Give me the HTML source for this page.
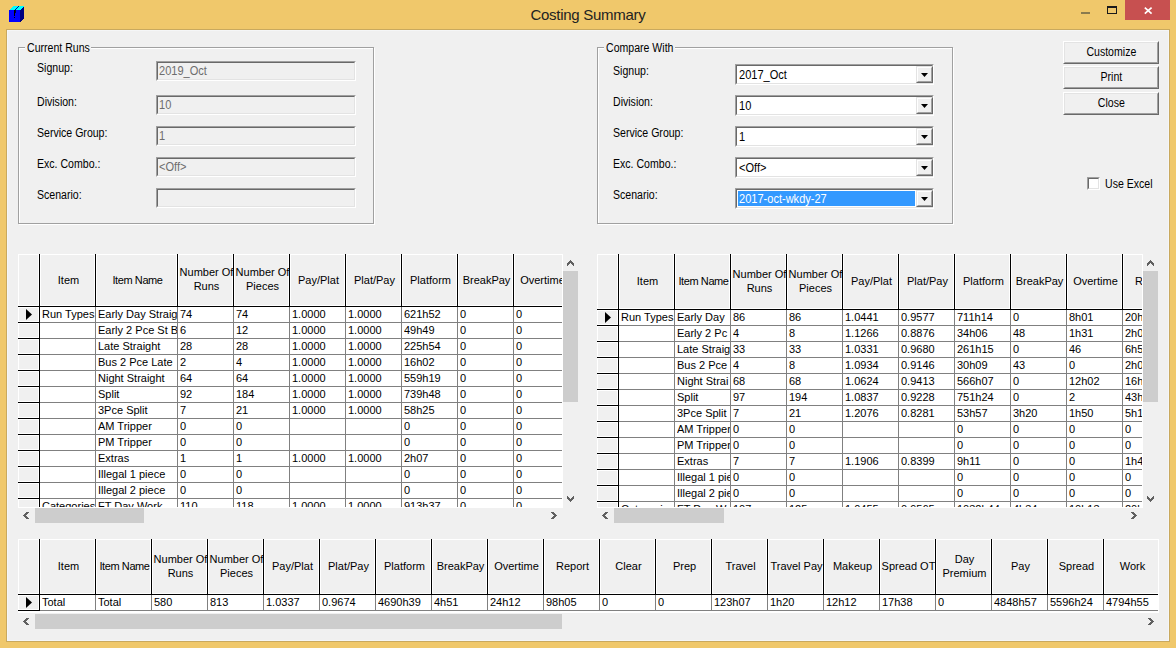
<!DOCTYPE html>
<html><head><meta charset="utf-8"><title>Costing Summary</title>
<style>
html,body{margin:0;padding:0;width:1176px;height:648px;overflow:hidden;background:#F0C86B}
body div{position:absolute;box-sizing:border-box}
.dt{font-family:'Liberation Sans', sans-serif;font-size:12px;line-height:14px;white-space:nowrap;color:#000;transform-origin:0 0}
.gt{font-family:'Liberation Sans', sans-serif;font-size:11px;line-height:13px;white-space:nowrap;color:#000}
</style></head><body>
<div style="left:0;top:0;width:1176px;height:648px;background:#F0C86B"></div>
<div style="left:6px;top:29px;width:1164px;height:613px;background:#C9A95E;"></div>
<div style="left:7px;top:30px;width:1162px;height:611px;background:#F5F6F7;"></div>
<div style="left:8px;top:31px;width:1160px;height:609px;background:#F0F0F0;"></div>
<div style="left:0;top:6px;width:1176px;height:17px;text-align:center;font-family:'Liberation Sans', sans-serif;font-size:15px;letter-spacing:-0.27px;line-height:17px;color:#222">Costing Summary</div>
<svg style="position:absolute;left:0;top:0" width="40" height="30" shape-rendering="crispEdges">
<polygon points="9,10 13,6 24,6 20,10" fill="#00FFFF"/>
<polygon points="20,10 24,6 24,18 20,22" fill="#000080"/>
<rect x="9" y="10" width="11" height="12" fill="#0000FF"/>
<polygon points="14,10 18,6 19,6 15,10" fill="#0000A0"/>
<rect x="14" y="10" width="1" height="6" fill="#000"/>
<rect x="15" y="10" width="1" height="3" fill="#000040"/>
<rect x="14" y="17" width="1" height="1" fill="#000"/>
</svg>
<div style="left:1081px;top:12px;width:9px;height:2px;background:#8A7B4E;"></div>
<div style="left:1107px;top:6px;width:10px;height:8px;border:1px solid #1a1a1a;border-top-width:2px"></div>
<div style="left:1125px;top:0px;width:45px;height:20px;background:#C75050;"></div>
<svg style="position:absolute;left:1125px;top:0" width="45" height="20">
<path d="M19.8 7.6 L26.6 13.6 M26.6 7.6 L19.8 13.6" stroke="#fff" stroke-width="1.7" fill="none"/>
</svg>
<div style="left:19px;top:48px;width:356px;height:177px;border:1px solid #fff;box-sizing:border-box"></div>
<div style="left:18px;top:47px;width:356px;height:177px;border:1px solid #A0A0A0;box-sizing:border-box"></div>
<div style="left:25px;top:45px;width:66px;height:5px;background:#F0F0F0;"></div>
<div class="dt" style="left:27px;top:41px;color:#000;transform:scaleX(0.88);">Current Runs</div>
<div style="left:598px;top:48px;width:356px;height:177px;border:1px solid #fff;box-sizing:border-box"></div>
<div style="left:597px;top:47px;width:356px;height:177px;border:1px solid #A0A0A0;box-sizing:border-box"></div>
<div style="left:604px;top:45px;width:71px;height:5px;background:#F0F0F0;"></div>
<div class="dt" style="left:606px;top:41px;color:#000;transform:scaleX(0.88);">Compare With</div>
<div class="dt" style="left:37px;top:61px;color:#000;transform:scaleX(0.88);">Signup:</div>
<div style="left:156px;top:61px;width:200px;height:20px;background:#F0F0F0;border-style:solid;border-width:1px;border-color:#A0A0A0 #FFFFFF #FFFFFF #A0A0A0;box-sizing:border-box"></div>
<div style="left:157px;top:62px;width:198px;height:18px;border-style:solid;border-width:1px;border-color:#696969 #E3E3E3 #E3E3E3 #696969;box-sizing:border-box"></div>
<div class="dt" style="left:159px;top:64px;color:#6D6D6D;transform:scaleX(0.92);">2019_Oct</div>
<div class="dt" style="left:37px;top:95px;color:#000;transform:scaleX(0.88);">Division:</div>
<div style="left:156px;top:95px;width:200px;height:20px;background:#F0F0F0;border-style:solid;border-width:1px;border-color:#A0A0A0 #FFFFFF #FFFFFF #A0A0A0;box-sizing:border-box"></div>
<div style="left:157px;top:96px;width:198px;height:18px;border-style:solid;border-width:1px;border-color:#696969 #E3E3E3 #E3E3E3 #696969;box-sizing:border-box"></div>
<div class="dt" style="left:159px;top:98px;color:#6D6D6D;transform:scaleX(0.92);">10</div>
<div class="dt" style="left:37px;top:126px;color:#000;transform:scaleX(0.88);">Service Group:</div>
<div style="left:156px;top:126px;width:200px;height:20px;background:#F0F0F0;border-style:solid;border-width:1px;border-color:#A0A0A0 #FFFFFF #FFFFFF #A0A0A0;box-sizing:border-box"></div>
<div style="left:157px;top:127px;width:198px;height:18px;border-style:solid;border-width:1px;border-color:#696969 #E3E3E3 #E3E3E3 #696969;box-sizing:border-box"></div>
<div class="dt" style="left:159px;top:129px;color:#6D6D6D;transform:scaleX(0.92);">1</div>
<div class="dt" style="left:37px;top:157px;color:#000;transform:scaleX(0.88);">Exc. Combo.:</div>
<div style="left:156px;top:157px;width:200px;height:20px;background:#F0F0F0;border-style:solid;border-width:1px;border-color:#A0A0A0 #FFFFFF #FFFFFF #A0A0A0;box-sizing:border-box"></div>
<div style="left:157px;top:158px;width:198px;height:18px;border-style:solid;border-width:1px;border-color:#696969 #E3E3E3 #E3E3E3 #696969;box-sizing:border-box"></div>
<div class="dt" style="left:159px;top:160px;color:#6D6D6D;transform:scaleX(0.92);">&lt;Off&gt;</div>
<div class="dt" style="left:37px;top:188px;color:#000;transform:scaleX(0.88);">Scenario:</div>
<div style="left:156px;top:188px;width:200px;height:20px;background:#F0F0F0;border-style:solid;border-width:1px;border-color:#A0A0A0 #FFFFFF #FFFFFF #A0A0A0;box-sizing:border-box"></div>
<div style="left:157px;top:189px;width:198px;height:18px;border-style:solid;border-width:1px;border-color:#696969 #E3E3E3 #E3E3E3 #696969;box-sizing:border-box"></div>
<div class="dt" style="left:613px;top:64px;color:#000;transform:scaleX(0.88);">Signup:</div>
<div style="left:735px;top:64px;width:199px;height:21px;background:#FFFFFF;border-style:solid;border-width:1px;border-color:#A0A0A0 #FFFFFF #FFFFFF #A0A0A0;box-sizing:border-box"></div>
<div style="left:736px;top:65px;width:197px;height:19px;border-style:solid;border-width:1px;border-color:#696969 #E3E3E3 #E3E3E3 #696969;box-sizing:border-box"></div>
<div style="left:916px;top:66px;width:17px;height:17px;background:#F0F0F0;border-style:solid;border-width:1px;border-color:#E3E3E3 #696969 #696969 #E3E3E3;box-sizing:border-box"></div>
<div style="left:917px;top:67px;width:15px;height:15px;border-style:solid;border-width:1px;border-color:#FFFFFF #A0A0A0 #A0A0A0 #FFFFFF;box-sizing:border-box"></div>
<svg style="position:absolute;left:921px;top:73px" width="8" height="5"><polygon points="0,0 7,0 3.5,4" fill="#000"/></svg>
<div class="dt" style="left:739px;top:68px;color:#000;transform:scaleX(0.92);">2017_Oct</div>
<div class="dt" style="left:613px;top:95px;color:#000;transform:scaleX(0.88);">Division:</div>
<div style="left:735px;top:95px;width:199px;height:21px;background:#FFFFFF;border-style:solid;border-width:1px;border-color:#A0A0A0 #FFFFFF #FFFFFF #A0A0A0;box-sizing:border-box"></div>
<div style="left:736px;top:96px;width:197px;height:19px;border-style:solid;border-width:1px;border-color:#696969 #E3E3E3 #E3E3E3 #696969;box-sizing:border-box"></div>
<div style="left:916px;top:97px;width:17px;height:17px;background:#F0F0F0;border-style:solid;border-width:1px;border-color:#E3E3E3 #696969 #696969 #E3E3E3;box-sizing:border-box"></div>
<div style="left:917px;top:98px;width:15px;height:15px;border-style:solid;border-width:1px;border-color:#FFFFFF #A0A0A0 #A0A0A0 #FFFFFF;box-sizing:border-box"></div>
<svg style="position:absolute;left:921px;top:104px" width="8" height="5"><polygon points="0,0 7,0 3.5,4" fill="#000"/></svg>
<div class="dt" style="left:739px;top:99px;color:#000;transform:scaleX(0.92);">10</div>
<div class="dt" style="left:613px;top:126px;color:#000;transform:scaleX(0.88);">Service Group:</div>
<div style="left:735px;top:126px;width:199px;height:21px;background:#FFFFFF;border-style:solid;border-width:1px;border-color:#A0A0A0 #FFFFFF #FFFFFF #A0A0A0;box-sizing:border-box"></div>
<div style="left:736px;top:127px;width:197px;height:19px;border-style:solid;border-width:1px;border-color:#696969 #E3E3E3 #E3E3E3 #696969;box-sizing:border-box"></div>
<div style="left:916px;top:128px;width:17px;height:17px;background:#F0F0F0;border-style:solid;border-width:1px;border-color:#E3E3E3 #696969 #696969 #E3E3E3;box-sizing:border-box"></div>
<div style="left:917px;top:129px;width:15px;height:15px;border-style:solid;border-width:1px;border-color:#FFFFFF #A0A0A0 #A0A0A0 #FFFFFF;box-sizing:border-box"></div>
<svg style="position:absolute;left:921px;top:135px" width="8" height="5"><polygon points="0,0 7,0 3.5,4" fill="#000"/></svg>
<div class="dt" style="left:739px;top:130px;color:#000;transform:scaleX(0.92);">1</div>
<div class="dt" style="left:613px;top:157px;color:#000;transform:scaleX(0.88);">Exc. Combo.:</div>
<div style="left:735px;top:157px;width:199px;height:21px;background:#FFFFFF;border-style:solid;border-width:1px;border-color:#A0A0A0 #FFFFFF #FFFFFF #A0A0A0;box-sizing:border-box"></div>
<div style="left:736px;top:158px;width:197px;height:19px;border-style:solid;border-width:1px;border-color:#696969 #E3E3E3 #E3E3E3 #696969;box-sizing:border-box"></div>
<div style="left:916px;top:159px;width:17px;height:17px;background:#F0F0F0;border-style:solid;border-width:1px;border-color:#E3E3E3 #696969 #696969 #E3E3E3;box-sizing:border-box"></div>
<div style="left:917px;top:160px;width:15px;height:15px;border-style:solid;border-width:1px;border-color:#FFFFFF #A0A0A0 #A0A0A0 #FFFFFF;box-sizing:border-box"></div>
<svg style="position:absolute;left:921px;top:166px" width="8" height="5"><polygon points="0,0 7,0 3.5,4" fill="#000"/></svg>
<div class="dt" style="left:739px;top:161px;color:#000;transform:scaleX(0.92);">&lt;Off&gt;</div>
<div class="dt" style="left:613px;top:188px;color:#000;transform:scaleX(0.88);">Scenario:</div>
<div style="left:735px;top:188px;width:199px;height:21px;background:#FFFFFF;border-style:solid;border-width:1px;border-color:#A0A0A0 #FFFFFF #FFFFFF #A0A0A0;box-sizing:border-box"></div>
<div style="left:736px;top:189px;width:197px;height:19px;border-style:solid;border-width:1px;border-color:#696969 #E3E3E3 #E3E3E3 #696969;box-sizing:border-box"></div>
<div style="left:916px;top:190px;width:17px;height:17px;background:#F0F0F0;border-style:solid;border-width:1px;border-color:#E3E3E3 #696969 #696969 #E3E3E3;box-sizing:border-box"></div>
<div style="left:917px;top:191px;width:15px;height:15px;border-style:solid;border-width:1px;border-color:#FFFFFF #A0A0A0 #A0A0A0 #FFFFFF;box-sizing:border-box"></div>
<svg style="position:absolute;left:921px;top:197px" width="8" height="5"><polygon points="0,0 7,0 3.5,4" fill="#000"/></svg>
<div style="left:738px;top:191px;width:177px;height:15px;background:#3399FF;"></div>
<div class="dt" style="left:739px;top:192px;color:#FFFFFF;transform:scaleX(0.92);">2017-oct-wkdy-27</div>
<div style="left:1063px;top:41px;width:96px;height:23px;background:#F0F0F0;border-style:solid;border-width:1px;border-color:#FFFFFF #696969 #696969 #FFFFFF;box-sizing:border-box"></div>
<div style="left:1064px;top:42px;width:94px;height:21px;border-style:solid;border-width:1px;border-color:#E3E3E3 #A0A0A0 #A0A0A0 #E3E3E3;box-sizing:border-box"></div>
<div class="dt" style="left:1063px;top:45px;width:96px;text-align:center"><span style="display:inline-block;transform:scaleX(0.88)">Customize</span></div>
<div style="left:1063px;top:66px;width:96px;height:23px;background:#F0F0F0;border-style:solid;border-width:1px;border-color:#FFFFFF #696969 #696969 #FFFFFF;box-sizing:border-box"></div>
<div style="left:1064px;top:67px;width:94px;height:21px;border-style:solid;border-width:1px;border-color:#E3E3E3 #A0A0A0 #A0A0A0 #E3E3E3;box-sizing:border-box"></div>
<div class="dt" style="left:1063px;top:70px;width:96px;text-align:center"><span style="display:inline-block;transform:scaleX(0.88)">Print</span></div>
<div style="left:1063px;top:92px;width:96px;height:23px;background:#F0F0F0;border-style:solid;border-width:1px;border-color:#FFFFFF #696969 #696969 #FFFFFF;box-sizing:border-box"></div>
<div style="left:1064px;top:93px;width:94px;height:21px;border-style:solid;border-width:1px;border-color:#E3E3E3 #A0A0A0 #A0A0A0 #E3E3E3;box-sizing:border-box"></div>
<div class="dt" style="left:1063px;top:96px;width:96px;text-align:center"><span style="display:inline-block;transform:scaleX(0.88)">Close</span></div>
<div style="left:1087px;top:177px;width:13px;height:13px;background:#FFFFFF;border-style:solid;border-width:1px;border-color:#A0A0A0 #FFFFFF #FFFFFF #A0A0A0;box-sizing:border-box"></div>
<div style="left:1088px;top:178px;width:11px;height:11px;border-style:solid;border-width:1px;border-color:#696969 #E3E3E3 #E3E3E3 #696969;box-sizing:border-box"></div>
<div class="dt" style="left:1105px;top:177px;color:#000;transform:scaleX(0.88);">Use Excel</div>
<div style="left:18px;top:254px;width:545px;height:254px;overflow:hidden;background:#FFFFFF">
<div style="left:0;top:0;width:21px;height:52px;background:#F0F0F0;border:1px solid #fff;box-sizing:border-box"></div>
<div style="left:22px;top:0;width:55px;height:52px;background:#F0F0F0;border:1px solid #fff;box-sizing:border-box"></div>
<div class="gt" style="left:23px;top:20px;width:55px;text-align:center;">Item</div>
<div style="left:77px;top:0;width:1px;height:52px;background:#000"></div>
<div style="left:78px;top:0;width:81px;height:52px;background:#F0F0F0;border:1px solid #fff;box-sizing:border-box"></div>
<div class="gt" style="left:79px;top:20px;width:81px;text-align:center;letter-spacing:-0.4px;">Item Name</div>
<div style="left:159px;top:0;width:1px;height:52px;background:#000"></div>
<div style="left:160px;top:0;width:55px;height:52px;background:#F0F0F0;border:1px solid #fff;box-sizing:border-box"></div>
<div class="gt" style="left:161px;top:11px;width:55px;text-align:center;line-height:14px">Number Of<br>Runs</div>
<div style="left:215px;top:0;width:1px;height:52px;background:#000"></div>
<div style="left:216px;top:0;width:55px;height:52px;background:#F0F0F0;border:1px solid #fff;box-sizing:border-box"></div>
<div class="gt" style="left:217px;top:11px;width:55px;text-align:center;line-height:14px">Number Of<br>Pieces</div>
<div style="left:271px;top:0;width:1px;height:52px;background:#000"></div>
<div style="left:272px;top:0;width:55px;height:52px;background:#F0F0F0;border:1px solid #fff;box-sizing:border-box"></div>
<div class="gt" style="left:273px;top:20px;width:55px;text-align:center;">Pay/Plat</div>
<div style="left:327px;top:0;width:1px;height:52px;background:#000"></div>
<div style="left:328px;top:0;width:55px;height:52px;background:#F0F0F0;border:1px solid #fff;box-sizing:border-box"></div>
<div class="gt" style="left:329px;top:20px;width:55px;text-align:center;">Plat/Pay</div>
<div style="left:383px;top:0;width:1px;height:52px;background:#000"></div>
<div style="left:384px;top:0;width:55px;height:52px;background:#F0F0F0;border:1px solid #fff;box-sizing:border-box"></div>
<div class="gt" style="left:385px;top:20px;width:55px;text-align:center;">Platform</div>
<div style="left:439px;top:0;width:1px;height:52px;background:#000"></div>
<div style="left:440px;top:0;width:55px;height:52px;background:#F0F0F0;border:1px solid #fff;box-sizing:border-box"></div>
<div class="gt" style="left:441px;top:20px;width:55px;text-align:center;">BreakPay</div>
<div style="left:495px;top:0;width:1px;height:52px;background:#000"></div>
<div style="left:496px;top:0;width:55px;height:52px;background:#F0F0F0;border:1px solid #fff;box-sizing:border-box"></div>
<div class="gt" style="left:497px;top:20px;width:55px;text-align:center;">Overtime</div>
<div style="left:551px;top:0;width:1px;height:52px;background:#000"></div>
<div style="left:21px;top:0;width:1px;height:52px;background:#000"></div>
<div style="left:0;top:52px;width:545px;height:1px;background:#000"></div>
<div style="left:0;top:53px;width:21px;height:15px;background:#F0F0F0;border:1px solid #fff;box-sizing:border-box"></div>
<svg style="position:absolute;left:8px;top:55px" width="7" height="12"><polygon points="0,0 6,5.5 0,11" fill="#000"/></svg>
<div style="left:0;top:68px;width:21px;height:1px;background:#000"></div>
<div style="left:22px;top:68px;width:545px;height:1px;background:#808080"></div>
<div class="gt" style="left:24px;top:54px;width:53px;overflow:hidden">Run Types</div>
<div class="gt" style="left:80px;top:54px;width:79px;overflow:hidden">Early Day Straig</div>
<div class="gt" style="left:162px;top:54px;width:53px;overflow:hidden">74</div>
<div class="gt" style="left:218px;top:54px;width:53px;overflow:hidden">74</div>
<div class="gt" style="left:274px;top:54px;width:53px;overflow:hidden">1.0000</div>
<div class="gt" style="left:330px;top:54px;width:53px;overflow:hidden">1.0000</div>
<div class="gt" style="left:386px;top:54px;width:53px;overflow:hidden">621h52</div>
<div class="gt" style="left:442px;top:54px;width:53px;overflow:hidden">0</div>
<div class="gt" style="left:498px;top:54px;width:53px;overflow:hidden">0</div>
<div style="left:0;top:69px;width:21px;height:15px;background:#F0F0F0;border:1px solid #fff;box-sizing:border-box"></div>
<div style="left:0;top:84px;width:21px;height:1px;background:#000"></div>
<div style="left:22px;top:84px;width:545px;height:1px;background:#808080"></div>
<div class="gt" style="left:80px;top:70px;width:79px;overflow:hidden">Early 2 Pce St B</div>
<div class="gt" style="left:162px;top:70px;width:53px;overflow:hidden">6</div>
<div class="gt" style="left:218px;top:70px;width:53px;overflow:hidden">12</div>
<div class="gt" style="left:274px;top:70px;width:53px;overflow:hidden">1.0000</div>
<div class="gt" style="left:330px;top:70px;width:53px;overflow:hidden">1.0000</div>
<div class="gt" style="left:386px;top:70px;width:53px;overflow:hidden">49h49</div>
<div class="gt" style="left:442px;top:70px;width:53px;overflow:hidden">0</div>
<div class="gt" style="left:498px;top:70px;width:53px;overflow:hidden">0</div>
<div style="left:0;top:85px;width:21px;height:15px;background:#F0F0F0;border:1px solid #fff;box-sizing:border-box"></div>
<div style="left:0;top:100px;width:21px;height:1px;background:#000"></div>
<div style="left:22px;top:100px;width:545px;height:1px;background:#808080"></div>
<div class="gt" style="left:80px;top:86px;width:79px;overflow:hidden">Late Straight</div>
<div class="gt" style="left:162px;top:86px;width:53px;overflow:hidden">28</div>
<div class="gt" style="left:218px;top:86px;width:53px;overflow:hidden">28</div>
<div class="gt" style="left:274px;top:86px;width:53px;overflow:hidden">1.0000</div>
<div class="gt" style="left:330px;top:86px;width:53px;overflow:hidden">1.0000</div>
<div class="gt" style="left:386px;top:86px;width:53px;overflow:hidden">225h54</div>
<div class="gt" style="left:442px;top:86px;width:53px;overflow:hidden">0</div>
<div class="gt" style="left:498px;top:86px;width:53px;overflow:hidden">0</div>
<div style="left:0;top:101px;width:21px;height:15px;background:#F0F0F0;border:1px solid #fff;box-sizing:border-box"></div>
<div style="left:0;top:116px;width:21px;height:1px;background:#000"></div>
<div style="left:22px;top:116px;width:545px;height:1px;background:#808080"></div>
<div class="gt" style="left:80px;top:102px;width:79px;overflow:hidden">Bus 2 Pce Late</div>
<div class="gt" style="left:162px;top:102px;width:53px;overflow:hidden">2</div>
<div class="gt" style="left:218px;top:102px;width:53px;overflow:hidden">4</div>
<div class="gt" style="left:274px;top:102px;width:53px;overflow:hidden">1.0000</div>
<div class="gt" style="left:330px;top:102px;width:53px;overflow:hidden">1.0000</div>
<div class="gt" style="left:386px;top:102px;width:53px;overflow:hidden">16h02</div>
<div class="gt" style="left:442px;top:102px;width:53px;overflow:hidden">0</div>
<div class="gt" style="left:498px;top:102px;width:53px;overflow:hidden">0</div>
<div style="left:0;top:117px;width:21px;height:15px;background:#F0F0F0;border:1px solid #fff;box-sizing:border-box"></div>
<div style="left:0;top:132px;width:21px;height:1px;background:#000"></div>
<div style="left:22px;top:132px;width:545px;height:1px;background:#808080"></div>
<div class="gt" style="left:80px;top:118px;width:79px;overflow:hidden">Night Straight</div>
<div class="gt" style="left:162px;top:118px;width:53px;overflow:hidden">64</div>
<div class="gt" style="left:218px;top:118px;width:53px;overflow:hidden">64</div>
<div class="gt" style="left:274px;top:118px;width:53px;overflow:hidden">1.0000</div>
<div class="gt" style="left:330px;top:118px;width:53px;overflow:hidden">1.0000</div>
<div class="gt" style="left:386px;top:118px;width:53px;overflow:hidden">559h19</div>
<div class="gt" style="left:442px;top:118px;width:53px;overflow:hidden">0</div>
<div class="gt" style="left:498px;top:118px;width:53px;overflow:hidden">0</div>
<div style="left:0;top:133px;width:21px;height:15px;background:#F0F0F0;border:1px solid #fff;box-sizing:border-box"></div>
<div style="left:0;top:148px;width:21px;height:1px;background:#000"></div>
<div style="left:22px;top:148px;width:545px;height:1px;background:#808080"></div>
<div class="gt" style="left:80px;top:134px;width:79px;overflow:hidden">Split</div>
<div class="gt" style="left:162px;top:134px;width:53px;overflow:hidden">92</div>
<div class="gt" style="left:218px;top:134px;width:53px;overflow:hidden">184</div>
<div class="gt" style="left:274px;top:134px;width:53px;overflow:hidden">1.0000</div>
<div class="gt" style="left:330px;top:134px;width:53px;overflow:hidden">1.0000</div>
<div class="gt" style="left:386px;top:134px;width:53px;overflow:hidden">739h48</div>
<div class="gt" style="left:442px;top:134px;width:53px;overflow:hidden">0</div>
<div class="gt" style="left:498px;top:134px;width:53px;overflow:hidden">0</div>
<div style="left:0;top:149px;width:21px;height:15px;background:#F0F0F0;border:1px solid #fff;box-sizing:border-box"></div>
<div style="left:0;top:164px;width:21px;height:1px;background:#000"></div>
<div style="left:22px;top:164px;width:545px;height:1px;background:#808080"></div>
<div class="gt" style="left:80px;top:150px;width:79px;overflow:hidden">3Pce Split</div>
<div class="gt" style="left:162px;top:150px;width:53px;overflow:hidden">7</div>
<div class="gt" style="left:218px;top:150px;width:53px;overflow:hidden">21</div>
<div class="gt" style="left:274px;top:150px;width:53px;overflow:hidden">1.0000</div>
<div class="gt" style="left:330px;top:150px;width:53px;overflow:hidden">1.0000</div>
<div class="gt" style="left:386px;top:150px;width:53px;overflow:hidden">58h25</div>
<div class="gt" style="left:442px;top:150px;width:53px;overflow:hidden">0</div>
<div class="gt" style="left:498px;top:150px;width:53px;overflow:hidden">0</div>
<div style="left:0;top:165px;width:21px;height:15px;background:#F0F0F0;border:1px solid #fff;box-sizing:border-box"></div>
<div style="left:0;top:180px;width:21px;height:1px;background:#000"></div>
<div style="left:22px;top:180px;width:545px;height:1px;background:#808080"></div>
<div class="gt" style="left:80px;top:166px;width:79px;overflow:hidden">AM Tripper</div>
<div class="gt" style="left:162px;top:166px;width:53px;overflow:hidden">0</div>
<div class="gt" style="left:218px;top:166px;width:53px;overflow:hidden">0</div>
<div class="gt" style="left:386px;top:166px;width:53px;overflow:hidden">0</div>
<div class="gt" style="left:442px;top:166px;width:53px;overflow:hidden">0</div>
<div class="gt" style="left:498px;top:166px;width:53px;overflow:hidden">0</div>
<div style="left:0;top:181px;width:21px;height:15px;background:#F0F0F0;border:1px solid #fff;box-sizing:border-box"></div>
<div style="left:0;top:196px;width:21px;height:1px;background:#000"></div>
<div style="left:22px;top:196px;width:545px;height:1px;background:#808080"></div>
<div class="gt" style="left:80px;top:182px;width:79px;overflow:hidden">PM Tripper</div>
<div class="gt" style="left:162px;top:182px;width:53px;overflow:hidden">0</div>
<div class="gt" style="left:218px;top:182px;width:53px;overflow:hidden">0</div>
<div class="gt" style="left:386px;top:182px;width:53px;overflow:hidden">0</div>
<div class="gt" style="left:442px;top:182px;width:53px;overflow:hidden">0</div>
<div class="gt" style="left:498px;top:182px;width:53px;overflow:hidden">0</div>
<div style="left:0;top:197px;width:21px;height:15px;background:#F0F0F0;border:1px solid #fff;box-sizing:border-box"></div>
<div style="left:0;top:212px;width:21px;height:1px;background:#000"></div>
<div style="left:22px;top:212px;width:545px;height:1px;background:#808080"></div>
<div class="gt" style="left:80px;top:198px;width:79px;overflow:hidden">Extras</div>
<div class="gt" style="left:162px;top:198px;width:53px;overflow:hidden">1</div>
<div class="gt" style="left:218px;top:198px;width:53px;overflow:hidden">1</div>
<div class="gt" style="left:274px;top:198px;width:53px;overflow:hidden">1.0000</div>
<div class="gt" style="left:330px;top:198px;width:53px;overflow:hidden">1.0000</div>
<div class="gt" style="left:386px;top:198px;width:53px;overflow:hidden">2h07</div>
<div class="gt" style="left:442px;top:198px;width:53px;overflow:hidden">0</div>
<div class="gt" style="left:498px;top:198px;width:53px;overflow:hidden">0</div>
<div style="left:0;top:213px;width:21px;height:15px;background:#F0F0F0;border:1px solid #fff;box-sizing:border-box"></div>
<div style="left:0;top:228px;width:21px;height:1px;background:#000"></div>
<div style="left:22px;top:228px;width:545px;height:1px;background:#808080"></div>
<div class="gt" style="left:80px;top:214px;width:79px;overflow:hidden">Illegal 1 piece</div>
<div class="gt" style="left:162px;top:214px;width:53px;overflow:hidden">0</div>
<div class="gt" style="left:218px;top:214px;width:53px;overflow:hidden">0</div>
<div class="gt" style="left:386px;top:214px;width:53px;overflow:hidden">0</div>
<div class="gt" style="left:442px;top:214px;width:53px;overflow:hidden">0</div>
<div class="gt" style="left:498px;top:214px;width:53px;overflow:hidden">0</div>
<div style="left:0;top:229px;width:21px;height:15px;background:#F0F0F0;border:1px solid #fff;box-sizing:border-box"></div>
<div style="left:0;top:244px;width:21px;height:1px;background:#000"></div>
<div style="left:22px;top:244px;width:545px;height:1px;background:#808080"></div>
<div class="gt" style="left:80px;top:230px;width:79px;overflow:hidden">Illegal 2 piece</div>
<div class="gt" style="left:162px;top:230px;width:53px;overflow:hidden">0</div>
<div class="gt" style="left:218px;top:230px;width:53px;overflow:hidden">0</div>
<div class="gt" style="left:386px;top:230px;width:53px;overflow:hidden">0</div>
<div class="gt" style="left:442px;top:230px;width:53px;overflow:hidden">0</div>
<div class="gt" style="left:498px;top:230px;width:53px;overflow:hidden">0</div>
<div style="left:0;top:245px;width:21px;height:15px;background:#F0F0F0;border:1px solid #fff;box-sizing:border-box"></div>
<div style="left:0;top:260px;width:21px;height:1px;background:#000"></div>
<div style="left:22px;top:260px;width:545px;height:1px;background:#808080"></div>
<div class="gt" style="left:24px;top:246px;width:53px;overflow:hidden">Categories</div>
<div class="gt" style="left:80px;top:246px;width:79px;overflow:hidden">FT Day Work</div>
<div class="gt" style="left:162px;top:246px;width:53px;overflow:hidden">110</div>
<div class="gt" style="left:218px;top:246px;width:53px;overflow:hidden">118</div>
<div class="gt" style="left:274px;top:246px;width:53px;overflow:hidden">1.0000</div>
<div class="gt" style="left:330px;top:246px;width:53px;overflow:hidden">1.0000</div>
<div class="gt" style="left:386px;top:246px;width:53px;overflow:hidden">913h37</div>
<div class="gt" style="left:442px;top:246px;width:53px;overflow:hidden">0</div>
<div class="gt" style="left:498px;top:246px;width:53px;overflow:hidden">0</div>
<div style="left:21px;top:52px;width:1px;height:202px;background:#000"></div>
<div style="left:77px;top:53px;width:1px;height:201px;background:#808080"></div>
<div style="left:159px;top:53px;width:1px;height:201px;background:#808080"></div>
<div style="left:215px;top:53px;width:1px;height:201px;background:#808080"></div>
<div style="left:271px;top:53px;width:1px;height:201px;background:#808080"></div>
<div style="left:327px;top:53px;width:1px;height:201px;background:#808080"></div>
<div style="left:383px;top:53px;width:1px;height:201px;background:#808080"></div>
<div style="left:439px;top:53px;width:1px;height:201px;background:#808080"></div>
<div style="left:495px;top:53px;width:1px;height:201px;background:#808080"></div>
<div style="left:551px;top:53px;width:1px;height:201px;background:#808080"></div>
<div style="left:544px;top:0;width:1px;height:254px;background:#fff"></div>
<div style="left:0;top:253px;width:545px;height:1px;background:#fff"></div>
</div>
<div style="left:18px;top:508px;width:545px;height:17px;background:#F0F0F0;"></div>
<div style="left:35px;top:508px;width:109px;height:15px;background:#CDCDCD;"></div>
<svg style="position:absolute;left:23px;top:512px" width="6" height="7" shape-rendering="crispEdges"><g fill="#606060"><rect x="3" y="0" width="1" height="1"/><rect x="4" y="0" width="1" height="1"/><rect x="5" y="0" width="1" height="1"/><rect x="2" y="1" width="1" height="1"/><rect x="3" y="1" width="1" height="1"/><rect x="4" y="1" width="1" height="1"/><rect x="1" y="2" width="1" height="1"/><rect x="2" y="2" width="1" height="1"/><rect x="3" y="2" width="1" height="1"/><rect x="0" y="3" width="1" height="1"/><rect x="1" y="3" width="1" height="1"/><rect x="2" y="3" width="1" height="1"/><rect x="1" y="4" width="1" height="1"/><rect x="2" y="4" width="1" height="1"/><rect x="3" y="4" width="1" height="1"/><rect x="2" y="5" width="1" height="1"/><rect x="3" y="5" width="1" height="1"/><rect x="4" y="5" width="1" height="1"/><rect x="3" y="6" width="1" height="1"/><rect x="4" y="6" width="1" height="1"/><rect x="5" y="6" width="1" height="1"/></g></svg>
<svg style="position:absolute;left:551px;top:512px" width="6" height="7" shape-rendering="crispEdges"><g fill="#606060"><rect x="2" y="0" width="1" height="1"/><rect x="1" y="0" width="1" height="1"/><rect x="0" y="0" width="1" height="1"/><rect x="3" y="1" width="1" height="1"/><rect x="2" y="1" width="1" height="1"/><rect x="1" y="1" width="1" height="1"/><rect x="4" y="2" width="1" height="1"/><rect x="3" y="2" width="1" height="1"/><rect x="2" y="2" width="1" height="1"/><rect x="5" y="3" width="1" height="1"/><rect x="4" y="3" width="1" height="1"/><rect x="3" y="3" width="1" height="1"/><rect x="4" y="4" width="1" height="1"/><rect x="3" y="4" width="1" height="1"/><rect x="2" y="4" width="1" height="1"/><rect x="3" y="5" width="1" height="1"/><rect x="2" y="5" width="1" height="1"/><rect x="1" y="5" width="1" height="1"/><rect x="2" y="6" width="1" height="1"/><rect x="1" y="6" width="1" height="1"/><rect x="0" y="6" width="1" height="1"/></g></svg>
<div style="left:563px;top:254px;width:17px;height:254px;background:#F0F0F0;"></div>
<div style="left:563px;top:271px;width:15px;height:131px;background:#CDCDCD;"></div>
<svg style="position:absolute;left:567px;top:260px" width="7" height="6" shape-rendering="crispEdges"><g fill="#606060"><rect x="0" y="3" width="1" height="1"/><rect x="0" y="4" width="1" height="1"/><rect x="0" y="5" width="1" height="1"/><rect x="1" y="2" width="1" height="1"/><rect x="1" y="3" width="1" height="1"/><rect x="1" y="4" width="1" height="1"/><rect x="2" y="1" width="1" height="1"/><rect x="2" y="2" width="1" height="1"/><rect x="2" y="3" width="1" height="1"/><rect x="3" y="0" width="1" height="1"/><rect x="3" y="1" width="1" height="1"/><rect x="3" y="2" width="1" height="1"/><rect x="4" y="1" width="1" height="1"/><rect x="4" y="2" width="1" height="1"/><rect x="4" y="3" width="1" height="1"/><rect x="5" y="2" width="1" height="1"/><rect x="5" y="3" width="1" height="1"/><rect x="5" y="4" width="1" height="1"/><rect x="6" y="3" width="1" height="1"/><rect x="6" y="4" width="1" height="1"/><rect x="6" y="5" width="1" height="1"/></g></svg>
<svg style="position:absolute;left:567px;top:496px" width="7" height="6" shape-rendering="crispEdges"><g fill="#606060"><rect x="0" y="2" width="1" height="1"/><rect x="0" y="1" width="1" height="1"/><rect x="0" y="0" width="1" height="1"/><rect x="1" y="3" width="1" height="1"/><rect x="1" y="2" width="1" height="1"/><rect x="1" y="1" width="1" height="1"/><rect x="2" y="4" width="1" height="1"/><rect x="2" y="3" width="1" height="1"/><rect x="2" y="2" width="1" height="1"/><rect x="3" y="5" width="1" height="1"/><rect x="3" y="4" width="1" height="1"/><rect x="3" y="3" width="1" height="1"/><rect x="4" y="4" width="1" height="1"/><rect x="4" y="3" width="1" height="1"/><rect x="4" y="2" width="1" height="1"/><rect x="5" y="3" width="1" height="1"/><rect x="5" y="2" width="1" height="1"/><rect x="5" y="1" width="1" height="1"/><rect x="6" y="2" width="1" height="1"/><rect x="6" y="1" width="1" height="1"/><rect x="6" y="0" width="1" height="1"/></g></svg>
<div style="left:563px;top:508px;width:17px;height:17px;background:#F0F0F0;"></div>
<div style="left:597px;top:254px;width:546px;height:254px;overflow:hidden;background:#FFFFFF">
<div style="left:0;top:0;width:21px;height:55px;background:#F0F0F0;border:1px solid #fff;box-sizing:border-box"></div>
<div style="left:22px;top:0;width:55px;height:55px;background:#F0F0F0;border:1px solid #fff;box-sizing:border-box"></div>
<div class="gt" style="left:23px;top:21px;width:55px;text-align:center;">Item</div>
<div style="left:77px;top:0;width:1px;height:55px;background:#000"></div>
<div style="left:78px;top:0;width:55px;height:55px;background:#F0F0F0;border:1px solid #fff;box-sizing:border-box"></div>
<div class="gt" style="left:79px;top:21px;width:55px;text-align:center;letter-spacing:-0.4px;">Item Name</div>
<div style="left:133px;top:0;width:1px;height:55px;background:#000"></div>
<div style="left:134px;top:0;width:55px;height:55px;background:#F0F0F0;border:1px solid #fff;box-sizing:border-box"></div>
<div class="gt" style="left:135px;top:13px;width:55px;text-align:center;line-height:14px">Number Of<br>Runs</div>
<div style="left:189px;top:0;width:1px;height:55px;background:#000"></div>
<div style="left:190px;top:0;width:55px;height:55px;background:#F0F0F0;border:1px solid #fff;box-sizing:border-box"></div>
<div class="gt" style="left:191px;top:13px;width:55px;text-align:center;line-height:14px">Number Of<br>Pieces</div>
<div style="left:245px;top:0;width:1px;height:55px;background:#000"></div>
<div style="left:246px;top:0;width:55px;height:55px;background:#F0F0F0;border:1px solid #fff;box-sizing:border-box"></div>
<div class="gt" style="left:247px;top:21px;width:55px;text-align:center;">Pay/Plat</div>
<div style="left:301px;top:0;width:1px;height:55px;background:#000"></div>
<div style="left:302px;top:0;width:55px;height:55px;background:#F0F0F0;border:1px solid #fff;box-sizing:border-box"></div>
<div class="gt" style="left:303px;top:21px;width:55px;text-align:center;">Plat/Pay</div>
<div style="left:357px;top:0;width:1px;height:55px;background:#000"></div>
<div style="left:358px;top:0;width:55px;height:55px;background:#F0F0F0;border:1px solid #fff;box-sizing:border-box"></div>
<div class="gt" style="left:359px;top:21px;width:55px;text-align:center;">Platform</div>
<div style="left:413px;top:0;width:1px;height:55px;background:#000"></div>
<div style="left:414px;top:0;width:55px;height:55px;background:#F0F0F0;border:1px solid #fff;box-sizing:border-box"></div>
<div class="gt" style="left:415px;top:21px;width:55px;text-align:center;">BreakPay</div>
<div style="left:469px;top:0;width:1px;height:55px;background:#000"></div>
<div style="left:470px;top:0;width:55px;height:55px;background:#F0F0F0;border:1px solid #fff;box-sizing:border-box"></div>
<div class="gt" style="left:471px;top:21px;width:55px;text-align:center;">Overtime</div>
<div style="left:525px;top:0;width:1px;height:55px;background:#000"></div>
<div style="left:526px;top:0;width:55px;height:55px;background:#F0F0F0;border:1px solid #fff;box-sizing:border-box"></div>
<div class="gt" style="left:527px;top:21px;width:55px;text-align:center;">Report</div>
<div style="left:581px;top:0;width:1px;height:55px;background:#000"></div>
<div style="left:21px;top:0;width:1px;height:55px;background:#000"></div>
<div style="left:0;top:55px;width:546px;height:1px;background:#000"></div>
<div style="left:0;top:56px;width:21px;height:15px;background:#F0F0F0;border:1px solid #fff;box-sizing:border-box"></div>
<svg style="position:absolute;left:8px;top:58px" width="7" height="12"><polygon points="0,0 6,5.5 0,11" fill="#000"/></svg>
<div style="left:0;top:71px;width:21px;height:1px;background:#000"></div>
<div style="left:22px;top:71px;width:546px;height:1px;background:#808080"></div>
<div class="gt" style="left:24px;top:57px;width:53px;overflow:hidden">Run Types</div>
<div class="gt" style="left:80px;top:57px;width:53px;overflow:hidden">Early Day</div>
<div class="gt" style="left:136px;top:57px;width:53px;overflow:hidden">86</div>
<div class="gt" style="left:192px;top:57px;width:53px;overflow:hidden">86</div>
<div class="gt" style="left:248px;top:57px;width:53px;overflow:hidden">1.0441</div>
<div class="gt" style="left:304px;top:57px;width:53px;overflow:hidden">0.9577</div>
<div class="gt" style="left:360px;top:57px;width:53px;overflow:hidden">711h14</div>
<div class="gt" style="left:416px;top:57px;width:53px;overflow:hidden">0</div>
<div class="gt" style="left:472px;top:57px;width:53px;overflow:hidden">8h01</div>
<div class="gt" style="left:528px;top:57px;width:53px;overflow:hidden">20h22</div>
<div style="left:0;top:72px;width:21px;height:15px;background:#F0F0F0;border:1px solid #fff;box-sizing:border-box"></div>
<div style="left:0;top:87px;width:21px;height:1px;background:#000"></div>
<div style="left:22px;top:87px;width:546px;height:1px;background:#808080"></div>
<div class="gt" style="left:80px;top:73px;width:53px;overflow:hidden">Early 2 Pc</div>
<div class="gt" style="left:136px;top:73px;width:53px;overflow:hidden">4</div>
<div class="gt" style="left:192px;top:73px;width:53px;overflow:hidden">8</div>
<div class="gt" style="left:248px;top:73px;width:53px;overflow:hidden">1.1266</div>
<div class="gt" style="left:304px;top:73px;width:53px;overflow:hidden">0.8876</div>
<div class="gt" style="left:360px;top:73px;width:53px;overflow:hidden">34h06</div>
<div class="gt" style="left:416px;top:73px;width:53px;overflow:hidden">48</div>
<div class="gt" style="left:472px;top:73px;width:53px;overflow:hidden">1h31</div>
<div class="gt" style="left:528px;top:73px;width:53px;overflow:hidden">2h05</div>
<div style="left:0;top:88px;width:21px;height:15px;background:#F0F0F0;border:1px solid #fff;box-sizing:border-box"></div>
<div style="left:0;top:103px;width:21px;height:1px;background:#000"></div>
<div style="left:22px;top:103px;width:546px;height:1px;background:#808080"></div>
<div class="gt" style="left:80px;top:89px;width:53px;overflow:hidden">Late Straig</div>
<div class="gt" style="left:136px;top:89px;width:53px;overflow:hidden">33</div>
<div class="gt" style="left:192px;top:89px;width:53px;overflow:hidden">33</div>
<div class="gt" style="left:248px;top:89px;width:53px;overflow:hidden">1.0331</div>
<div class="gt" style="left:304px;top:89px;width:53px;overflow:hidden">0.9680</div>
<div class="gt" style="left:360px;top:89px;width:53px;overflow:hidden">261h15</div>
<div class="gt" style="left:416px;top:89px;width:53px;overflow:hidden">0</div>
<div class="gt" style="left:472px;top:89px;width:53px;overflow:hidden">46</div>
<div class="gt" style="left:528px;top:89px;width:53px;overflow:hidden">6h55</div>
<div style="left:0;top:104px;width:21px;height:15px;background:#F0F0F0;border:1px solid #fff;box-sizing:border-box"></div>
<div style="left:0;top:119px;width:21px;height:1px;background:#000"></div>
<div style="left:22px;top:119px;width:546px;height:1px;background:#808080"></div>
<div class="gt" style="left:80px;top:105px;width:53px;overflow:hidden">Bus 2 Pce</div>
<div class="gt" style="left:136px;top:105px;width:53px;overflow:hidden">4</div>
<div class="gt" style="left:192px;top:105px;width:53px;overflow:hidden">8</div>
<div class="gt" style="left:248px;top:105px;width:53px;overflow:hidden">1.0934</div>
<div class="gt" style="left:304px;top:105px;width:53px;overflow:hidden">0.9146</div>
<div class="gt" style="left:360px;top:105px;width:53px;overflow:hidden">30h09</div>
<div class="gt" style="left:416px;top:105px;width:53px;overflow:hidden">43</div>
<div class="gt" style="left:472px;top:105px;width:53px;overflow:hidden">0</div>
<div class="gt" style="left:528px;top:105px;width:53px;overflow:hidden">2h08</div>
<div style="left:0;top:120px;width:21px;height:15px;background:#F0F0F0;border:1px solid #fff;box-sizing:border-box"></div>
<div style="left:0;top:135px;width:21px;height:1px;background:#000"></div>
<div style="left:22px;top:135px;width:546px;height:1px;background:#808080"></div>
<div class="gt" style="left:80px;top:121px;width:53px;overflow:hidden">Night Strai</div>
<div class="gt" style="left:136px;top:121px;width:53px;overflow:hidden">68</div>
<div class="gt" style="left:192px;top:121px;width:53px;overflow:hidden">68</div>
<div class="gt" style="left:248px;top:121px;width:53px;overflow:hidden">1.0624</div>
<div class="gt" style="left:304px;top:121px;width:53px;overflow:hidden">0.9413</div>
<div class="gt" style="left:360px;top:121px;width:53px;overflow:hidden">566h07</div>
<div class="gt" style="left:416px;top:121px;width:53px;overflow:hidden">0</div>
<div class="gt" style="left:472px;top:121px;width:53px;overflow:hidden">12h02</div>
<div class="gt" style="left:528px;top:121px;width:53px;overflow:hidden">16h40</div>
<div style="left:0;top:136px;width:21px;height:15px;background:#F0F0F0;border:1px solid #fff;box-sizing:border-box"></div>
<div style="left:0;top:151px;width:21px;height:1px;background:#000"></div>
<div style="left:22px;top:151px;width:546px;height:1px;background:#808080"></div>
<div class="gt" style="left:80px;top:137px;width:53px;overflow:hidden">Split</div>
<div class="gt" style="left:136px;top:137px;width:53px;overflow:hidden">97</div>
<div class="gt" style="left:192px;top:137px;width:53px;overflow:hidden">194</div>
<div class="gt" style="left:248px;top:137px;width:53px;overflow:hidden">1.0837</div>
<div class="gt" style="left:304px;top:137px;width:53px;overflow:hidden">0.9228</div>
<div class="gt" style="left:360px;top:137px;width:53px;overflow:hidden">751h24</div>
<div class="gt" style="left:416px;top:137px;width:53px;overflow:hidden">0</div>
<div class="gt" style="left:472px;top:137px;width:53px;overflow:hidden">2</div>
<div class="gt" style="left:528px;top:137px;width:53px;overflow:hidden">43h15</div>
<div style="left:0;top:152px;width:21px;height:15px;background:#F0F0F0;border:1px solid #fff;box-sizing:border-box"></div>
<div style="left:0;top:167px;width:21px;height:1px;background:#000"></div>
<div style="left:22px;top:167px;width:546px;height:1px;background:#808080"></div>
<div class="gt" style="left:80px;top:153px;width:53px;overflow:hidden">3Pce Split</div>
<div class="gt" style="left:136px;top:153px;width:53px;overflow:hidden">7</div>
<div class="gt" style="left:192px;top:153px;width:53px;overflow:hidden">21</div>
<div class="gt" style="left:248px;top:153px;width:53px;overflow:hidden">1.2076</div>
<div class="gt" style="left:304px;top:153px;width:53px;overflow:hidden">0.8281</div>
<div class="gt" style="left:360px;top:153px;width:53px;overflow:hidden">53h57</div>
<div class="gt" style="left:416px;top:153px;width:53px;overflow:hidden">3h20</div>
<div class="gt" style="left:472px;top:153px;width:53px;overflow:hidden">1h50</div>
<div class="gt" style="left:528px;top:153px;width:53px;overflow:hidden">5h10</div>
<div style="left:0;top:168px;width:21px;height:15px;background:#F0F0F0;border:1px solid #fff;box-sizing:border-box"></div>
<div style="left:0;top:183px;width:21px;height:1px;background:#000"></div>
<div style="left:22px;top:183px;width:546px;height:1px;background:#808080"></div>
<div class="gt" style="left:80px;top:169px;width:53px;overflow:hidden">AM Tripper</div>
<div class="gt" style="left:136px;top:169px;width:53px;overflow:hidden">0</div>
<div class="gt" style="left:192px;top:169px;width:53px;overflow:hidden">0</div>
<div class="gt" style="left:360px;top:169px;width:53px;overflow:hidden">0</div>
<div class="gt" style="left:416px;top:169px;width:53px;overflow:hidden">0</div>
<div class="gt" style="left:472px;top:169px;width:53px;overflow:hidden">0</div>
<div class="gt" style="left:528px;top:169px;width:53px;overflow:hidden">0</div>
<div style="left:0;top:184px;width:21px;height:15px;background:#F0F0F0;border:1px solid #fff;box-sizing:border-box"></div>
<div style="left:0;top:199px;width:21px;height:1px;background:#000"></div>
<div style="left:22px;top:199px;width:546px;height:1px;background:#808080"></div>
<div class="gt" style="left:80px;top:185px;width:53px;overflow:hidden">PM Tripper</div>
<div class="gt" style="left:136px;top:185px;width:53px;overflow:hidden">0</div>
<div class="gt" style="left:192px;top:185px;width:53px;overflow:hidden">0</div>
<div class="gt" style="left:360px;top:185px;width:53px;overflow:hidden">0</div>
<div class="gt" style="left:416px;top:185px;width:53px;overflow:hidden">0</div>
<div class="gt" style="left:472px;top:185px;width:53px;overflow:hidden">0</div>
<div class="gt" style="left:528px;top:185px;width:53px;overflow:hidden">0</div>
<div style="left:0;top:200px;width:21px;height:15px;background:#F0F0F0;border:1px solid #fff;box-sizing:border-box"></div>
<div style="left:0;top:215px;width:21px;height:1px;background:#000"></div>
<div style="left:22px;top:215px;width:546px;height:1px;background:#808080"></div>
<div class="gt" style="left:80px;top:201px;width:53px;overflow:hidden">Extras</div>
<div class="gt" style="left:136px;top:201px;width:53px;overflow:hidden">7</div>
<div class="gt" style="left:192px;top:201px;width:53px;overflow:hidden">7</div>
<div class="gt" style="left:248px;top:201px;width:53px;overflow:hidden">1.1906</div>
<div class="gt" style="left:304px;top:201px;width:53px;overflow:hidden">0.8399</div>
<div class="gt" style="left:360px;top:201px;width:53px;overflow:hidden">9h11</div>
<div class="gt" style="left:416px;top:201px;width:53px;overflow:hidden">0</div>
<div class="gt" style="left:472px;top:201px;width:53px;overflow:hidden">0</div>
<div class="gt" style="left:528px;top:201px;width:53px;overflow:hidden">1h45</div>
<div style="left:0;top:216px;width:21px;height:15px;background:#F0F0F0;border:1px solid #fff;box-sizing:border-box"></div>
<div style="left:0;top:231px;width:21px;height:1px;background:#000"></div>
<div style="left:22px;top:231px;width:546px;height:1px;background:#808080"></div>
<div class="gt" style="left:80px;top:217px;width:53px;overflow:hidden">Illegal 1 pie</div>
<div class="gt" style="left:136px;top:217px;width:53px;overflow:hidden">0</div>
<div class="gt" style="left:192px;top:217px;width:53px;overflow:hidden">0</div>
<div class="gt" style="left:360px;top:217px;width:53px;overflow:hidden">0</div>
<div class="gt" style="left:416px;top:217px;width:53px;overflow:hidden">0</div>
<div class="gt" style="left:472px;top:217px;width:53px;overflow:hidden">0</div>
<div class="gt" style="left:528px;top:217px;width:53px;overflow:hidden">0</div>
<div style="left:0;top:232px;width:21px;height:15px;background:#F0F0F0;border:1px solid #fff;box-sizing:border-box"></div>
<div style="left:0;top:247px;width:21px;height:1px;background:#000"></div>
<div style="left:22px;top:247px;width:546px;height:1px;background:#808080"></div>
<div class="gt" style="left:80px;top:233px;width:53px;overflow:hidden">Illegal 2 pie</div>
<div class="gt" style="left:136px;top:233px;width:53px;overflow:hidden">0</div>
<div class="gt" style="left:192px;top:233px;width:53px;overflow:hidden">0</div>
<div class="gt" style="left:360px;top:233px;width:53px;overflow:hidden">0</div>
<div class="gt" style="left:416px;top:233px;width:53px;overflow:hidden">0</div>
<div class="gt" style="left:472px;top:233px;width:53px;overflow:hidden">0</div>
<div class="gt" style="left:528px;top:233px;width:53px;overflow:hidden">0</div>
<div style="left:0;top:248px;width:21px;height:15px;background:#F0F0F0;border:1px solid #fff;box-sizing:border-box"></div>
<div style="left:0;top:263px;width:21px;height:1px;background:#000"></div>
<div style="left:22px;top:263px;width:546px;height:1px;background:#808080"></div>
<div class="gt" style="left:24px;top:249px;width:53px;overflow:hidden">Categories</div>
<div class="gt" style="left:80px;top:249px;width:53px;overflow:hidden">FT Day W</div>
<div class="gt" style="left:136px;top:249px;width:53px;overflow:hidden">107</div>
<div class="gt" style="left:192px;top:249px;width:53px;overflow:hidden">125</div>
<div class="gt" style="left:248px;top:249px;width:53px;overflow:hidden">1.0455</div>
<div class="gt" style="left:304px;top:249px;width:53px;overflow:hidden">0.9565</div>
<div class="gt" style="left:360px;top:249px;width:53px;overflow:hidden">1032h44</div>
<div class="gt" style="left:416px;top:249px;width:53px;overflow:hidden">4h34</div>
<div class="gt" style="left:472px;top:249px;width:53px;overflow:hidden">10h13</div>
<div class="gt" style="left:528px;top:249px;width:53px;overflow:hidden">20h00</div>
<div style="left:21px;top:55px;width:1px;height:199px;background:#000"></div>
<div style="left:77px;top:56px;width:1px;height:198px;background:#808080"></div>
<div style="left:133px;top:56px;width:1px;height:198px;background:#808080"></div>
<div style="left:189px;top:56px;width:1px;height:198px;background:#808080"></div>
<div style="left:245px;top:56px;width:1px;height:198px;background:#808080"></div>
<div style="left:301px;top:56px;width:1px;height:198px;background:#808080"></div>
<div style="left:357px;top:56px;width:1px;height:198px;background:#808080"></div>
<div style="left:413px;top:56px;width:1px;height:198px;background:#808080"></div>
<div style="left:469px;top:56px;width:1px;height:198px;background:#808080"></div>
<div style="left:525px;top:56px;width:1px;height:198px;background:#808080"></div>
<div style="left:581px;top:56px;width:1px;height:198px;background:#808080"></div>
<div style="left:545px;top:0;width:1px;height:254px;background:#fff"></div>
<div style="left:0;top:253px;width:546px;height:1px;background:#fff"></div>
</div>
<div style="left:597px;top:508px;width:546px;height:17px;background:#F0F0F0;"></div>
<div style="left:614px;top:508px;width:110px;height:15px;background:#CDCDCD;"></div>
<svg style="position:absolute;left:602px;top:512px" width="6" height="7" shape-rendering="crispEdges"><g fill="#606060"><rect x="3" y="0" width="1" height="1"/><rect x="4" y="0" width="1" height="1"/><rect x="5" y="0" width="1" height="1"/><rect x="2" y="1" width="1" height="1"/><rect x="3" y="1" width="1" height="1"/><rect x="4" y="1" width="1" height="1"/><rect x="1" y="2" width="1" height="1"/><rect x="2" y="2" width="1" height="1"/><rect x="3" y="2" width="1" height="1"/><rect x="0" y="3" width="1" height="1"/><rect x="1" y="3" width="1" height="1"/><rect x="2" y="3" width="1" height="1"/><rect x="1" y="4" width="1" height="1"/><rect x="2" y="4" width="1" height="1"/><rect x="3" y="4" width="1" height="1"/><rect x="2" y="5" width="1" height="1"/><rect x="3" y="5" width="1" height="1"/><rect x="4" y="5" width="1" height="1"/><rect x="3" y="6" width="1" height="1"/><rect x="4" y="6" width="1" height="1"/><rect x="5" y="6" width="1" height="1"/></g></svg>
<svg style="position:absolute;left:1131px;top:512px" width="6" height="7" shape-rendering="crispEdges"><g fill="#606060"><rect x="2" y="0" width="1" height="1"/><rect x="1" y="0" width="1" height="1"/><rect x="0" y="0" width="1" height="1"/><rect x="3" y="1" width="1" height="1"/><rect x="2" y="1" width="1" height="1"/><rect x="1" y="1" width="1" height="1"/><rect x="4" y="2" width="1" height="1"/><rect x="3" y="2" width="1" height="1"/><rect x="2" y="2" width="1" height="1"/><rect x="5" y="3" width="1" height="1"/><rect x="4" y="3" width="1" height="1"/><rect x="3" y="3" width="1" height="1"/><rect x="4" y="4" width="1" height="1"/><rect x="3" y="4" width="1" height="1"/><rect x="2" y="4" width="1" height="1"/><rect x="3" y="5" width="1" height="1"/><rect x="2" y="5" width="1" height="1"/><rect x="1" y="5" width="1" height="1"/><rect x="2" y="6" width="1" height="1"/><rect x="1" y="6" width="1" height="1"/><rect x="0" y="6" width="1" height="1"/></g></svg>
<div style="left:1143px;top:254px;width:17px;height:254px;background:#F0F0F0;"></div>
<div style="left:1143px;top:271px;width:15px;height:131px;background:#CDCDCD;"></div>
<svg style="position:absolute;left:1147px;top:260px" width="7" height="6" shape-rendering="crispEdges"><g fill="#606060"><rect x="0" y="3" width="1" height="1"/><rect x="0" y="4" width="1" height="1"/><rect x="0" y="5" width="1" height="1"/><rect x="1" y="2" width="1" height="1"/><rect x="1" y="3" width="1" height="1"/><rect x="1" y="4" width="1" height="1"/><rect x="2" y="1" width="1" height="1"/><rect x="2" y="2" width="1" height="1"/><rect x="2" y="3" width="1" height="1"/><rect x="3" y="0" width="1" height="1"/><rect x="3" y="1" width="1" height="1"/><rect x="3" y="2" width="1" height="1"/><rect x="4" y="1" width="1" height="1"/><rect x="4" y="2" width="1" height="1"/><rect x="4" y="3" width="1" height="1"/><rect x="5" y="2" width="1" height="1"/><rect x="5" y="3" width="1" height="1"/><rect x="5" y="4" width="1" height="1"/><rect x="6" y="3" width="1" height="1"/><rect x="6" y="4" width="1" height="1"/><rect x="6" y="5" width="1" height="1"/></g></svg>
<svg style="position:absolute;left:1147px;top:496px" width="7" height="6" shape-rendering="crispEdges"><g fill="#606060"><rect x="0" y="2" width="1" height="1"/><rect x="0" y="1" width="1" height="1"/><rect x="0" y="0" width="1" height="1"/><rect x="1" y="3" width="1" height="1"/><rect x="1" y="2" width="1" height="1"/><rect x="1" y="1" width="1" height="1"/><rect x="2" y="4" width="1" height="1"/><rect x="2" y="3" width="1" height="1"/><rect x="2" y="2" width="1" height="1"/><rect x="3" y="5" width="1" height="1"/><rect x="3" y="4" width="1" height="1"/><rect x="3" y="3" width="1" height="1"/><rect x="4" y="4" width="1" height="1"/><rect x="4" y="3" width="1" height="1"/><rect x="4" y="2" width="1" height="1"/><rect x="5" y="3" width="1" height="1"/><rect x="5" y="2" width="1" height="1"/><rect x="5" y="1" width="1" height="1"/><rect x="6" y="2" width="1" height="1"/><rect x="6" y="1" width="1" height="1"/><rect x="6" y="0" width="1" height="1"/></g></svg>
<div style="left:1143px;top:508px;width:17px;height:17px;background:#F0F0F0;"></div>
<div style="left:18px;top:539px;width:1141px;height:74px;overflow:hidden;background:#FFFFFF">
<div style="left:0;top:0;width:21px;height:55px;background:#F0F0F0;border:1px solid #fff;box-sizing:border-box"></div>
<div style="left:22px;top:0;width:55px;height:55px;background:#F0F0F0;border:1px solid #fff;box-sizing:border-box"></div>
<div class="gt" style="left:23px;top:21px;width:55px;text-align:center;">Item</div>
<div style="left:77px;top:0;width:1px;height:55px;background:#000"></div>
<div style="left:78px;top:0;width:55px;height:55px;background:#F0F0F0;border:1px solid #fff;box-sizing:border-box"></div>
<div class="gt" style="left:79px;top:21px;width:55px;text-align:center;letter-spacing:-0.4px;">Item Name</div>
<div style="left:133px;top:0;width:1px;height:55px;background:#000"></div>
<div style="left:134px;top:0;width:55px;height:55px;background:#F0F0F0;border:1px solid #fff;box-sizing:border-box"></div>
<div class="gt" style="left:135px;top:13px;width:55px;text-align:center;line-height:14px">Number Of<br>Runs</div>
<div style="left:189px;top:0;width:1px;height:55px;background:#000"></div>
<div style="left:190px;top:0;width:55px;height:55px;background:#F0F0F0;border:1px solid #fff;box-sizing:border-box"></div>
<div class="gt" style="left:191px;top:13px;width:55px;text-align:center;line-height:14px">Number Of<br>Pieces</div>
<div style="left:245px;top:0;width:1px;height:55px;background:#000"></div>
<div style="left:246px;top:0;width:55px;height:55px;background:#F0F0F0;border:1px solid #fff;box-sizing:border-box"></div>
<div class="gt" style="left:247px;top:21px;width:55px;text-align:center;">Pay/Plat</div>
<div style="left:301px;top:0;width:1px;height:55px;background:#000"></div>
<div style="left:302px;top:0;width:55px;height:55px;background:#F0F0F0;border:1px solid #fff;box-sizing:border-box"></div>
<div class="gt" style="left:303px;top:21px;width:55px;text-align:center;">Plat/Pay</div>
<div style="left:357px;top:0;width:1px;height:55px;background:#000"></div>
<div style="left:358px;top:0;width:55px;height:55px;background:#F0F0F0;border:1px solid #fff;box-sizing:border-box"></div>
<div class="gt" style="left:359px;top:21px;width:55px;text-align:center;">Platform</div>
<div style="left:413px;top:0;width:1px;height:55px;background:#000"></div>
<div style="left:414px;top:0;width:55px;height:55px;background:#F0F0F0;border:1px solid #fff;box-sizing:border-box"></div>
<div class="gt" style="left:415px;top:21px;width:55px;text-align:center;">BreakPay</div>
<div style="left:469px;top:0;width:1px;height:55px;background:#000"></div>
<div style="left:470px;top:0;width:55px;height:55px;background:#F0F0F0;border:1px solid #fff;box-sizing:border-box"></div>
<div class="gt" style="left:471px;top:21px;width:55px;text-align:center;">Overtime</div>
<div style="left:525px;top:0;width:1px;height:55px;background:#000"></div>
<div style="left:526px;top:0;width:55px;height:55px;background:#F0F0F0;border:1px solid #fff;box-sizing:border-box"></div>
<div class="gt" style="left:527px;top:21px;width:55px;text-align:center;">Report</div>
<div style="left:581px;top:0;width:1px;height:55px;background:#000"></div>
<div style="left:582px;top:0;width:55px;height:55px;background:#F0F0F0;border:1px solid #fff;box-sizing:border-box"></div>
<div class="gt" style="left:583px;top:21px;width:55px;text-align:center;">Clear</div>
<div style="left:637px;top:0;width:1px;height:55px;background:#000"></div>
<div style="left:638px;top:0;width:55px;height:55px;background:#F0F0F0;border:1px solid #fff;box-sizing:border-box"></div>
<div class="gt" style="left:639px;top:21px;width:55px;text-align:center;">Prep</div>
<div style="left:693px;top:0;width:1px;height:55px;background:#000"></div>
<div style="left:694px;top:0;width:55px;height:55px;background:#F0F0F0;border:1px solid #fff;box-sizing:border-box"></div>
<div class="gt" style="left:695px;top:21px;width:55px;text-align:center;">Travel</div>
<div style="left:749px;top:0;width:1px;height:55px;background:#000"></div>
<div style="left:750px;top:0;width:55px;height:55px;background:#F0F0F0;border:1px solid #fff;box-sizing:border-box"></div>
<div class="gt" style="left:751px;top:21px;width:55px;text-align:center;">Travel Pay</div>
<div style="left:805px;top:0;width:1px;height:55px;background:#000"></div>
<div style="left:806px;top:0;width:55px;height:55px;background:#F0F0F0;border:1px solid #fff;box-sizing:border-box"></div>
<div class="gt" style="left:807px;top:21px;width:55px;text-align:center;">Makeup</div>
<div style="left:861px;top:0;width:1px;height:55px;background:#000"></div>
<div style="left:862px;top:0;width:55px;height:55px;background:#F0F0F0;border:1px solid #fff;box-sizing:border-box"></div>
<div class="gt" style="left:863px;top:21px;width:55px;text-align:center;">Spread OT</div>
<div style="left:917px;top:0;width:1px;height:55px;background:#000"></div>
<div style="left:918px;top:0;width:55px;height:55px;background:#F0F0F0;border:1px solid #fff;box-sizing:border-box"></div>
<div class="gt" style="left:919px;top:13px;width:55px;text-align:center;line-height:14px">Day<br>Premium</div>
<div style="left:973px;top:0;width:1px;height:55px;background:#000"></div>
<div style="left:974px;top:0;width:55px;height:55px;background:#F0F0F0;border:1px solid #fff;box-sizing:border-box"></div>
<div class="gt" style="left:975px;top:21px;width:55px;text-align:center;">Pay</div>
<div style="left:1029px;top:0;width:1px;height:55px;background:#000"></div>
<div style="left:1030px;top:0;width:55px;height:55px;background:#F0F0F0;border:1px solid #fff;box-sizing:border-box"></div>
<div class="gt" style="left:1031px;top:21px;width:55px;text-align:center;">Spread</div>
<div style="left:1085px;top:0;width:1px;height:55px;background:#000"></div>
<div style="left:1086px;top:0;width:55px;height:55px;background:#F0F0F0;border:1px solid #fff;box-sizing:border-box"></div>
<div class="gt" style="left:1087px;top:21px;width:55px;text-align:center;">Work</div>
<div style="left:1141px;top:0;width:1px;height:55px;background:#000"></div>
<div style="left:21px;top:0;width:1px;height:55px;background:#000"></div>
<div style="left:0;top:55px;width:1141px;height:1px;background:#000"></div>
<div style="left:0;top:56px;width:21px;height:15px;background:#F0F0F0;border:1px solid #fff;box-sizing:border-box"></div>
<svg style="position:absolute;left:8px;top:58px" width="7" height="12"><polygon points="0,0 6,5.5 0,11" fill="#000"/></svg>
<div style="left:0;top:71px;width:21px;height:1px;background:#000"></div>
<div style="left:22px;top:71px;width:1141px;height:1px;background:#808080"></div>
<div class="gt" style="left:24px;top:57px;width:53px;overflow:hidden">Total</div>
<div class="gt" style="left:80px;top:57px;width:53px;overflow:hidden">Total</div>
<div class="gt" style="left:136px;top:57px;width:53px;overflow:hidden">580</div>
<div class="gt" style="left:192px;top:57px;width:53px;overflow:hidden">813</div>
<div class="gt" style="left:248px;top:57px;width:53px;overflow:hidden">1.0337</div>
<div class="gt" style="left:304px;top:57px;width:53px;overflow:hidden">0.9674</div>
<div class="gt" style="left:360px;top:57px;width:53px;overflow:hidden">4690h39</div>
<div class="gt" style="left:416px;top:57px;width:53px;overflow:hidden">4h51</div>
<div class="gt" style="left:472px;top:57px;width:53px;overflow:hidden">24h12</div>
<div class="gt" style="left:528px;top:57px;width:53px;overflow:hidden">98h05</div>
<div class="gt" style="left:584px;top:57px;width:53px;overflow:hidden">0</div>
<div class="gt" style="left:640px;top:57px;width:53px;overflow:hidden">0</div>
<div class="gt" style="left:696px;top:57px;width:53px;overflow:hidden">123h07</div>
<div class="gt" style="left:752px;top:57px;width:53px;overflow:hidden">1h20</div>
<div class="gt" style="left:808px;top:57px;width:53px;overflow:hidden">12h12</div>
<div class="gt" style="left:864px;top:57px;width:53px;overflow:hidden">17h38</div>
<div class="gt" style="left:920px;top:57px;width:53px;overflow:hidden">0</div>
<div class="gt" style="left:976px;top:57px;width:53px;overflow:hidden">4848h57</div>
<div class="gt" style="left:1032px;top:57px;width:53px;overflow:hidden">5596h24</div>
<div class="gt" style="left:1088px;top:57px;width:53px;overflow:hidden">4794h55</div>
<div style="left:21px;top:55px;width:1px;height:17px;background:#000"></div>
<div style="left:77px;top:56px;width:1px;height:16px;background:#808080"></div>
<div style="left:133px;top:56px;width:1px;height:16px;background:#808080"></div>
<div style="left:189px;top:56px;width:1px;height:16px;background:#808080"></div>
<div style="left:245px;top:56px;width:1px;height:16px;background:#808080"></div>
<div style="left:301px;top:56px;width:1px;height:16px;background:#808080"></div>
<div style="left:357px;top:56px;width:1px;height:16px;background:#808080"></div>
<div style="left:413px;top:56px;width:1px;height:16px;background:#808080"></div>
<div style="left:469px;top:56px;width:1px;height:16px;background:#808080"></div>
<div style="left:525px;top:56px;width:1px;height:16px;background:#808080"></div>
<div style="left:581px;top:56px;width:1px;height:16px;background:#808080"></div>
<div style="left:637px;top:56px;width:1px;height:16px;background:#808080"></div>
<div style="left:693px;top:56px;width:1px;height:16px;background:#808080"></div>
<div style="left:749px;top:56px;width:1px;height:16px;background:#808080"></div>
<div style="left:805px;top:56px;width:1px;height:16px;background:#808080"></div>
<div style="left:861px;top:56px;width:1px;height:16px;background:#808080"></div>
<div style="left:917px;top:56px;width:1px;height:16px;background:#808080"></div>
<div style="left:973px;top:56px;width:1px;height:16px;background:#808080"></div>
<div style="left:1029px;top:56px;width:1px;height:16px;background:#808080"></div>
<div style="left:1085px;top:56px;width:1px;height:16px;background:#808080"></div>
<div style="left:1141px;top:56px;width:1px;height:16px;background:#808080"></div>
<div style="left:1140px;top:0;width:1px;height:74px;background:#fff"></div>
<div style="left:0;top:73px;width:1141px;height:1px;background:#fff"></div>
</div>
<div style="left:18px;top:614px;width:1141px;height:17px;background:#F0F0F0;"></div>
<div style="left:35px;top:614px;width:527px;height:15px;background:#CDCDCD;"></div>
<svg style="position:absolute;left:23px;top:618px" width="6" height="7" shape-rendering="crispEdges"><g fill="#606060"><rect x="3" y="0" width="1" height="1"/><rect x="4" y="0" width="1" height="1"/><rect x="5" y="0" width="1" height="1"/><rect x="2" y="1" width="1" height="1"/><rect x="3" y="1" width="1" height="1"/><rect x="4" y="1" width="1" height="1"/><rect x="1" y="2" width="1" height="1"/><rect x="2" y="2" width="1" height="1"/><rect x="3" y="2" width="1" height="1"/><rect x="0" y="3" width="1" height="1"/><rect x="1" y="3" width="1" height="1"/><rect x="2" y="3" width="1" height="1"/><rect x="1" y="4" width="1" height="1"/><rect x="2" y="4" width="1" height="1"/><rect x="3" y="4" width="1" height="1"/><rect x="2" y="5" width="1" height="1"/><rect x="3" y="5" width="1" height="1"/><rect x="4" y="5" width="1" height="1"/><rect x="3" y="6" width="1" height="1"/><rect x="4" y="6" width="1" height="1"/><rect x="5" y="6" width="1" height="1"/></g></svg>
<svg style="position:absolute;left:1148px;top:618px" width="6" height="7" shape-rendering="crispEdges"><g fill="#606060"><rect x="2" y="0" width="1" height="1"/><rect x="1" y="0" width="1" height="1"/><rect x="0" y="0" width="1" height="1"/><rect x="3" y="1" width="1" height="1"/><rect x="2" y="1" width="1" height="1"/><rect x="1" y="1" width="1" height="1"/><rect x="4" y="2" width="1" height="1"/><rect x="3" y="2" width="1" height="1"/><rect x="2" y="2" width="1" height="1"/><rect x="5" y="3" width="1" height="1"/><rect x="4" y="3" width="1" height="1"/><rect x="3" y="3" width="1" height="1"/><rect x="4" y="4" width="1" height="1"/><rect x="3" y="4" width="1" height="1"/><rect x="2" y="4" width="1" height="1"/><rect x="3" y="5" width="1" height="1"/><rect x="2" y="5" width="1" height="1"/><rect x="1" y="5" width="1" height="1"/><rect x="2" y="6" width="1" height="1"/><rect x="1" y="6" width="1" height="1"/><rect x="0" y="6" width="1" height="1"/></g></svg>
</body></html>
